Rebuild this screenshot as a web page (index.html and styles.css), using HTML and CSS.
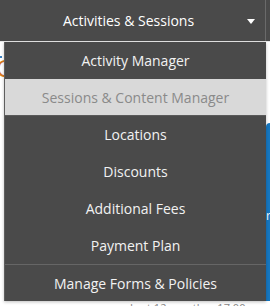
FILE: index.html
```html
<!DOCTYPE html>
<html>
<head>
<meta charset="utf-8">
<link rel="stylesheet" href="styles.css">
</head>
<body>
<div class="topbar">
  <div class="nav-item">
    <span class="nav-label">Activities &amp; Sessions</span>
    <span class="caret"></span>
  </div>
  <div class="nav-rest"></div>
</div>
<div class="page">
  <div class="left-strip">
    <span class="dot"></span>
    <span class="big-c">C</span>
  </div>
  <div class="blue-block"><span class="blue-text">rs</span></div>
  <div class="footer-text">Last 12 months · 17.00</div>
</div>
<ul class="menu">
  <li class="menu-item">Activity Manager</li>
  <li class="menu-item active">Sessions &amp; Content Manager</li>
  <li class="menu-item">Locations</li>
  <li class="menu-item">Discounts</li>
  <li class="menu-item">Additional Fees</li>
  <li class="menu-item">Payment Plan</li>
  <li class="menu-item divided">Manage Forms &amp; Policies</li>
</ul>
</body>
</html>
```
FILE: styles.css
```css
html, body {
  margin: 0;
  padding: 0;
  background: #ffffff;
  width: 270px;
  height: 306px;
  overflow: hidden;
  font-family: "Open Sans", "Liberation Sans", sans-serif;
}
.topbar {
  display: flex;
  height: 41px;
  background: #4a4a4a;
  border-bottom: 1px solid #e8e8e8;
}
.nav-item {
  flex: 0 0 266px;
  display: flex;
  align-items: center;
  justify-content: center;
  position: relative;
  border-right: 1px solid #6a6a6a;
  box-sizing: border-box;
}
.nav-label {
  color: #ffffff;
  font-size: 14px;
  margin-left: -8px;
}
.caret {
  position: absolute;
  right: 10px;
  top: 19px;
  width: 0;
  height: 0;
  border-left: 4px solid transparent;
  border-right: 4px solid transparent;
  border-top: 5px solid #ffffff;
}
.nav-rest {
  flex: 1;
  background: #4a4a4a;
}
.page {
  position: relative;
  height: 264px;
}
.left-strip {
  width: 4px;
  overflow: hidden;
  position: relative;
  height: 60px;
}
.dot {
  position: absolute;
  left: 0;
  top: 14px;
  width: 2px;
  height: 2px;
  background: #3a7fc0;
}
.big-c {
  position: absolute;
  left: -4px;
  top: 14px;
  font-size: 24px;
  line-height: 24px;
  color: #d87a20;
}
.blue-block {
  position: absolute;
  left: 266px;
  top: 81px;
  width: 10px;
  height: 178px;
  background: #1677c0;
  border-top-left-radius: 4px;
}
.blue-text {
  position: absolute;
  left: 0;
  top: 84px;
  color: #ffffff;
  font-size: 12px;
}
.footer-text {
  position: absolute;
  left: 130px;
  top: 258px;
  color: #888888;
  font-size: 11px;
  white-space: nowrap;
}
.menu {
  position: absolute;
  left: 4px;
  top: 42px;
  width: 262px;
  margin: 0;
  padding: 0;
  list-style: none;
  background: #4a4a4a;
  border-left: 1px solid #5e5e5e;
  box-sizing: border-box;
  box-shadow: 0 1px 3px rgba(0,0,0,0.25);
}
.menu-item {
  height: 37px;
  display: flex;
  align-items: center;
  justify-content: center;
  color: #f2f2f2;
  font-size: 14px;
}
.menu-item.active {
  background: #d9d9d9;
  color: #8a8a8a;
  height: 36px;
  border-bottom: 1px solid #5a5a5a;
}
.menu-item.divided {
  border-top: 1px solid #666666;
  height: 36px;
}
```
